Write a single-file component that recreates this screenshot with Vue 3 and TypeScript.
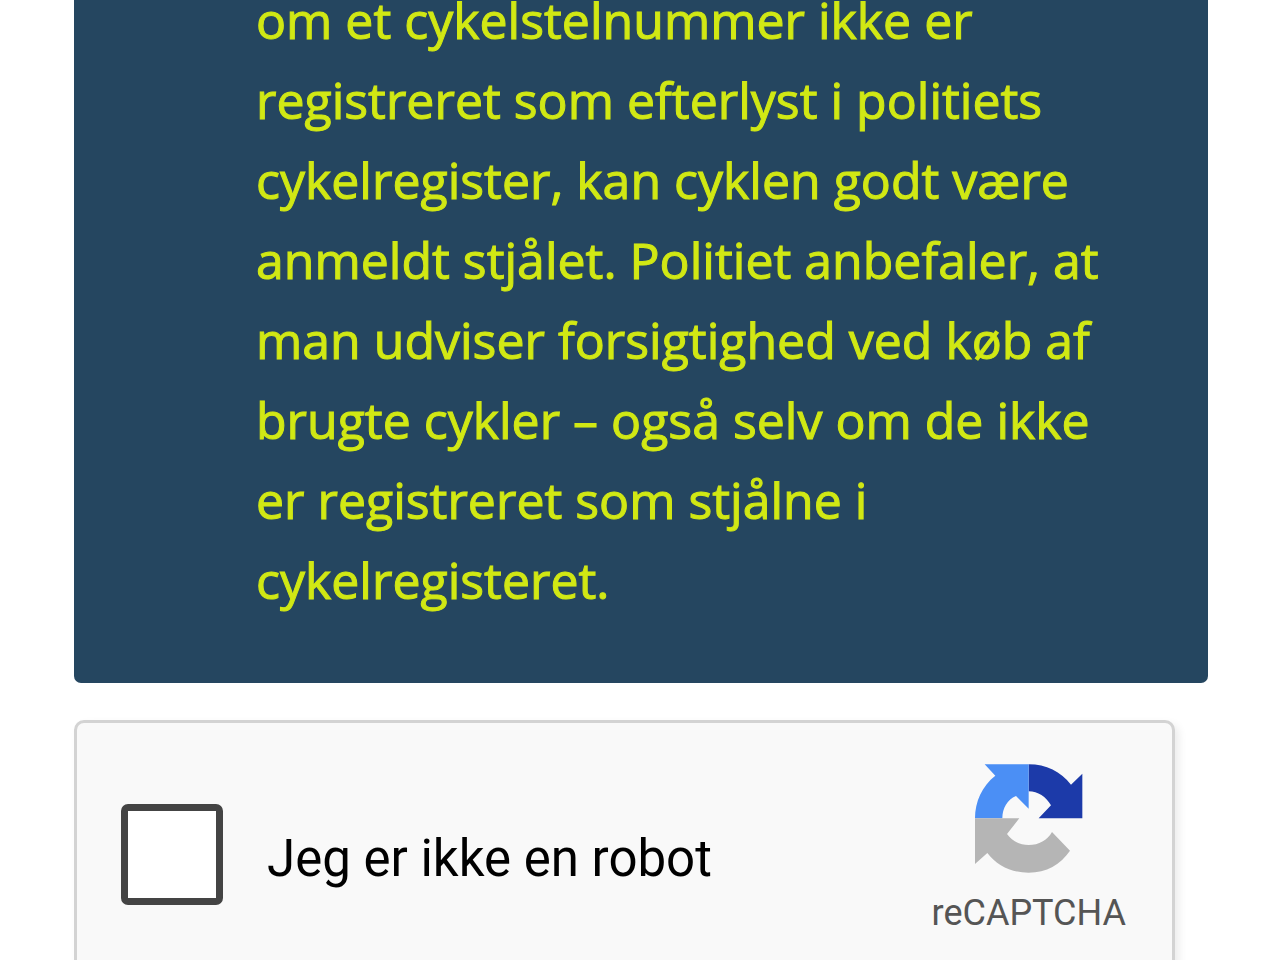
<script setup lang="ts">
import { ref } from 'vue'

const lines: string[] = [
  'om et cykelstelnummer ikke er',
  'registreret som efterlyst i politiets',
  'cykelregister, kan cyklen godt være',
  'anmeldt stjålet. Politiet anbefaler, at',
  'man udviser forsigtighed ved køb af',
  'brugte cykler – også selv om de ikke',
  'er registreret som stjålne i',
  'cykelregisteret.',
]
const checked = ref(false)
</script>

<template>
  <main class="page">
    <section class="notice">
      <p class="notice-text">
        <span v-for="line in lines" :key="line" class="line">{{ line + ' ' }}</span>
      </p>
    </section>
    <section class="captcha">
      <input id="robot" v-model="checked" class="box" type="checkbox" />
      <label class="label" for="robot">Jeg er ikke en robot</label>
      <div class="brand">
        <svg class="logo" viewBox="160 70 330 336" aria-hidden="true">
          <path fill="#1c3aa9" d="M324 74C376 74 421 96 451 135L485 102V236H354L391 197C376 171 352 155 324 155Z" />
          <path fill="#4b8ff5" d="M192 74H324V207L286 169C260 180 245 205 245 236H163C163 186 184 139 224 108Z" />
          <path fill="#b5b5b5" d="M163 236H296L259 283C274 304 297 316 324 316C355 316 380 302 394 277L448 333C420 374 377 399 324 399C273 399 229 378 200 340L163 373Z" />
        </svg>
        <span class="brand-name">reCAPTCHA</span>
      </div>
    </section>
  </main>
</template>

<style>
body {
  margin: 0;
  background: #fff;
}
</style>

<style scoped>
.page {
  box-sizing: border-box;
  height: 100vh;
  overflow: hidden;
  padding: 0 72px 0 74px;
}
.notice {
  margin-top: -20px;
  padding: 0 24px 63px 182px;
  background: #254660;
  border-radius: 0 0 7px 7px;
}
.notice-text {
  margin: 0;
  color: #d1e814;
  font: 400 50px/80px "Open Sans", sans-serif;
  -webkit-text-stroke: 1px #d1e814;
}
.line {
  display: block;
  white-space: nowrap;
}
.captcha {
  box-sizing: border-box;
  display: flex;
  align-items: flex-start;
  height: 282px;
  margin: 37px 33px 0 0;
  padding: 40px 46px 0 44px;
  background: #f9f9f9;
  border: 3px solid #d3d3d3;
  border-radius: 10px;
  box-shadow: 4px 4px 8px rgba(0, 0, 0, 0.08);
}
.box {
  appearance: none;
  box-sizing: border-box;
  flex: none;
  width: 102px;
  height: 101px;
  margin: 41px 0 0;
  background: #fff;
  border: 7px solid #444;
  border-radius: 7px;
}
.box:checked {
  background: #4b8ff5;
}
.label {
  flex: 1;
  margin: 66px 0 0 44px;
  color: #000;
  font: 400 51px/60px Roboto, sans-serif;
}
.brand {
  display: flex;
  flex-direction: column;
  align-items: center;
}
.logo {
  width: 110px;
  height: 112px;
}
.brand-name {
  margin-top: 17px;
  color: #555;
  font: 400 36px/42px Roboto, sans-serif;
}
</style>
